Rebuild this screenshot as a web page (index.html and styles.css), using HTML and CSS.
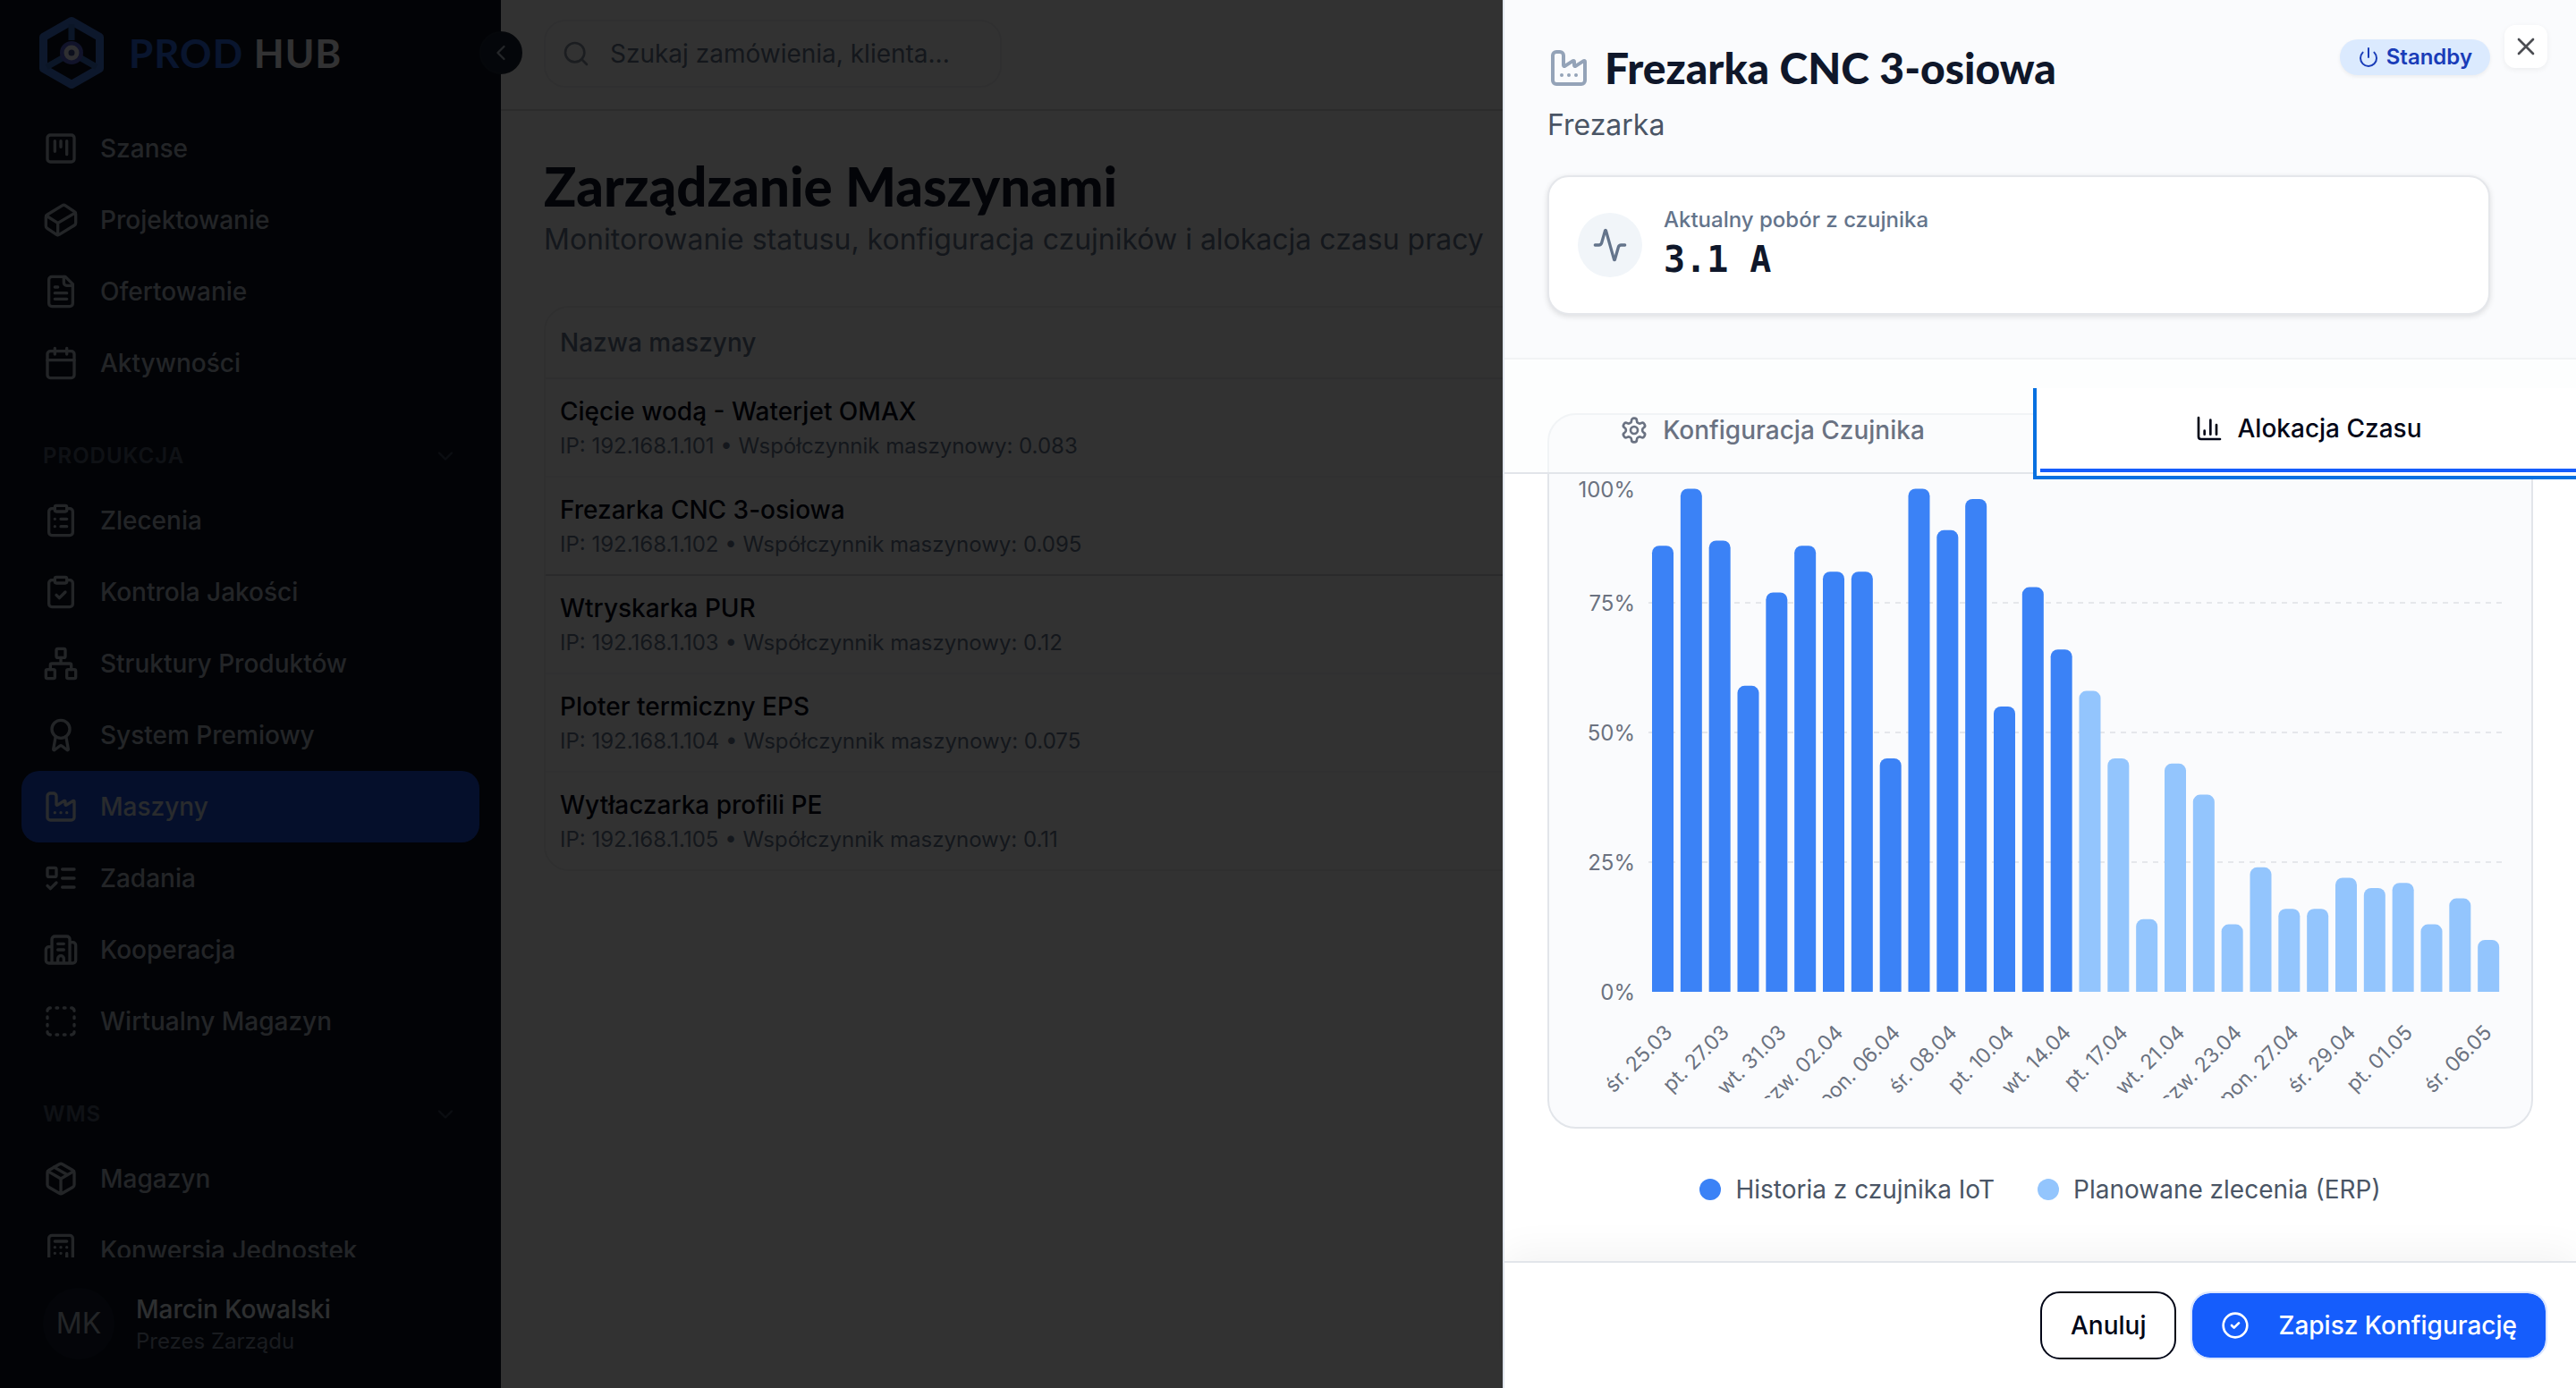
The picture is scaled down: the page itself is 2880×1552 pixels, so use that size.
FILE: index.html
```html
<!DOCTYPE html>
<html lang="pl">

<head>
    <meta charset="UTF-8">
    <meta name="viewport" content="width=device-width, initial-scale=1">
    <title>Prod Hub - Maszyny</title>
    <link rel="stylesheet" href="styles.css">
</head>

<body>
    <!-- icon sprite -->
    <svg class="sprite" aria-hidden="true">
        <symbol id="i-kanban" viewBox="0 0 24 24"><rect x="3" y="3" width="18" height="18" rx="2"/><path d="M8 7v7M12 7v4M16 7v9"/></symbol>
        <symbol id="i-cuboid" viewBox="0 0 24 24"><path d="m21.12 6.4-6.05-4.06a2 2 0 0 0-2.17-.05L2.95 8.41a2 2 0 0 0-.95 1.7v5.82a2 2 0 0 0 .88 1.66l6.05 4.07a2 2 0 0 0 2.17.05l9.95-6.12a2 2 0 0 0 .95-1.7V8.06a2 2 0 0 0-.88-1.66Z"/><path d="M10 22v-8L2.25 9.15M10 14l11.77-6.87"/></symbol>
        <symbol id="i-file" viewBox="0 0 24 24"><path d="M15 2H6a2 2 0 0 0-2 2v16a2 2 0 0 0 2 2h12a2 2 0 0 0 2-2V7Z"/><path d="M14 2v4a2 2 0 0 0 2 2h4M10 9H8M16 13H8M16 17H8"/></symbol>
        <symbol id="i-calendar" viewBox="0 0 24 24"><path d="M8 2v4M16 2v4M3 10h18"/><rect x="3" y="4" width="18" height="18" rx="2"/></symbol>
        <symbol id="i-cliplist" viewBox="0 0 24 24"><rect x="8" y="2" width="8" height="4" rx="1"/><path d="M16 4h2a2 2 0 0 1 2 2v14a2 2 0 0 1-2 2H6a2 2 0 0 1-2-2V6a2 2 0 0 1 2-2h2M12 11h4M12 16h4M8 11h.01M8 16h.01"/></symbol>
        <symbol id="i-clipcheck" viewBox="0 0 24 24"><rect x="8" y="2" width="8" height="4" rx="1"/><path d="M16 4h2a2 2 0 0 1 2 2v14a2 2 0 0 1-2 2H6a2 2 0 0 1-2-2V6a2 2 0 0 1 2-2h2M9 14l2 2 4-4"/></symbol>
        <symbol id="i-network" viewBox="0 0 24 24"><rect x="16" y="16" width="6" height="6" rx="1"/><rect x="2" y="16" width="6" height="6" rx="1"/><rect x="9" y="2" width="6" height="6" rx="1"/><path d="M5 16v-3a1 1 0 0 1 1-1h12a1 1 0 0 1 1 1v3M12 12V8"/></symbol>
        <symbol id="i-award" viewBox="0 0 24 24"><path d="m15.477 12.89 1.515 8.526a.5.5 0 0 1-.81.47l-3.58-2.687a1 1 0 0 0-1.197 0l-3.586 2.686a.5.5 0 0 1-.81-.469l1.514-8.526"/><circle cx="12" cy="8" r="6"/></symbol>
        <symbol id="i-factory" viewBox="0 0 24 24"><path d="M12 16h.01M16 16h.01M8 16h.01M3 19a2 2 0 0 0 2 2h14a2 2 0 0 0 2-2V8.5a.5.5 0 0 0-.769-.422l-4.462 2.844A.5.5 0 0 1 15 10.5v-2a.5.5 0 0 0-.769-.422L9.77 10.922A.5.5 0 0 1 9 10.5V5a2 2 0 0 0-2-2H5a2 2 0 0 0-2 2z"/></symbol>
        <symbol id="i-todo" viewBox="0 0 24 24"><rect x="3" y="5" width="6" height="6" rx="1"/><path d="m3 17 2 2 4-4M13 6h8M13 12h8M13 18h8"/></symbol>
        <symbol id="i-building" viewBox="0 0 24 24"><path d="M10 12h4M10 8h4M14 21v-3a2 2 0 0 0-4 0v3M6 10H4a2 2 0 0 0-2 2v7a2 2 0 0 0 2 2h16a2 2 0 0 0 2-2V9a2 2 0 0 0-2-2h-2M6 21V5a2 2 0 0 1 2-2h8a2 2 0 0 1 2 2v16"/></symbol>
        <symbol id="i-dashed" viewBox="0 0 24 24"><path d="M5 3a2 2 0 0 0-2 2M19 3a2 2 0 0 1 2 2M21 19a2 2 0 0 1-2 2M5 21a2 2 0 0 1-2-2M9 3h1M9 21h1M14 3h1M14 21h1M3 9v1M21 9v1M3 14v1M21 14v1"/></symbol>
        <symbol id="i-package" viewBox="0 0 24 24"><path d="M11 21.73a2 2 0 0 0 2 0l7-4A2 2 0 0 0 21 16V8a2 2 0 0 0-1-1.73l-7-4a2 2 0 0 0-2 0l-7 4A2 2 0 0 0 3 8v8a2 2 0 0 0 1 1.73zM12 22V12"/><path d="M3.29 7 12 12l8.71-5M7.5 4.27l9 5.15"/></symbol>
        <symbol id="i-calc" viewBox="0 0 24 24"><rect x="4" y="2" width="16" height="20" rx="2"/><path d="M8 6h8M16 14v4M16 10h.01M12 10h.01M8 10h.01M12 14h.01M8 14h.01M12 18h.01M8 18h.01"/></symbol>
        <symbol id="i-down" viewBox="0 0 24 24"><path d="m6 9 6 6 6-6"/></symbol>
        <symbol id="i-left" viewBox="0 0 24 24"><path d="m15 18-6-6 6-6"/></symbol>
        <symbol id="i-search" viewBox="0 0 24 24"><circle cx="11" cy="11" r="8"/><path d="m21 21-4.3-4.3"/></symbol>
        <symbol id="i-power" viewBox="0 0 24 24"><path d="M12 2v10M18.4 6.6a9 9 0 1 1-12.77.04"/></symbol>
        <symbol id="i-x" viewBox="0 0 24 24"><path d="M18 6 6 18M6 6l12 12"/></symbol>
        <symbol id="i-activity" viewBox="0 0 24 24"><path d="M22 12h-2.48a2 2 0 0 0-1.93 1.46l-2.35 8.36a.25.25 0 0 1-.48 0L9.24 2.18a.25.25 0 0 0-.48 0l-2.35 8.36A2 2 0 0 1 4.49 12H2"/></symbol>
        <symbol id="i-gear" viewBox="0 0 24 24"><path d="M12.22 2h-.44a2 2 0 0 0-2 2v.18a2 2 0 0 1-1 1.73l-.43.25a2 2 0 0 1-2 0l-.15-.08a2 2 0 0 0-2.73.73l-.22.38a2 2 0 0 0 .73 2.73l.15.1a2 2 0 0 1 1 1.72v.51a2 2 0 0 1-1 1.74l-.15.09a2 2 0 0 0-.73 2.73l.22.38a2 2 0 0 0 2.73.73l.15-.08a2 2 0 0 1 2 0l.43.25a2 2 0 0 1 1 1.73V20a2 2 0 0 0 2 2h.44a2 2 0 0 0 2-2v-.18a2 2 0 0 1 1-1.73l.43-.25a2 2 0 0 1 2 0l.15.08a2 2 0 0 0 2.73-.73l.22-.39a2 2 0 0 0-.73-2.73l-.15-.08a2 2 0 0 1-1-1.74v-.5a2 2 0 0 1 1-1.74l.15-.09a2 2 0 0 0 .73-2.73l-.22-.38a2 2 0 0 0-2.73-.73l-.15.08a2 2 0 0 1-2 0l-.43-.25a2 2 0 0 1-1-1.73V4a2 2 0 0 0-2-2z"/><circle cx="12" cy="12" r="3"/></symbol>
        <symbol id="i-chart" viewBox="0 0 24 24"><path d="M3 3v16a2 2 0 0 0 2 2h16M18 17V9M13 17V5M8 17v-3"/></symbol>
        <symbol id="i-check" viewBox="0 0 24 24"><circle cx="12" cy="12" r="10"/><path d="m9 12 2 2 4-4"/></symbol>
    </svg>

    <div class="app">
        <aside class="sidebar">
            <div class="brand">
                <svg class="brand-logo" viewBox="0 0 80 88" aria-hidden="true">
                    <g fill="none" stroke-linejoin="round">
                        <path d="M40 8.500 71.500 26.500v35L40 79.500 8.500 61.500v-35z" stroke="#4479dc" stroke-width="9"/>
                        <path d="M40 30V12M40 44 12 60M40 44l28 16" stroke="#3a6fc4" stroke-width="7"/>
                        <circle cx="40" cy="44" r="13" fill="#5560cf"/>
                        <circle cx="40" cy="44" r="6" fill="#3c4a8a" stroke="#e8ecf4" stroke-width="5"/>
                    </g>
                </svg>
                <span class="brand-name"><span class="brand-prod">PROD</span> HUB</span>
            </div>
            <nav class="nav">
                <a href="#" class="nav-item"><svg class="icon"><use href="#i-kanban"/></svg>Szanse</a>
                <a href="#" class="nav-item"><svg class="icon"><use href="#i-cuboid"/></svg>Projektowanie</a>
                <a href="#" class="nav-item"><svg class="icon"><use href="#i-file"/></svg>Ofertowanie</a>
                <a href="#" class="nav-item"><svg class="icon"><use href="#i-calendar"/></svg>Aktywności</a>

                <button type="button" class="nav-group">PRODUKCJA<svg class="icon icon-sm"><use href="#i-down"/></svg></button>
                <a href="#" class="nav-item"><svg class="icon"><use href="#i-cliplist"/></svg>Zlecenia</a>
                <a href="#" class="nav-item"><svg class="icon"><use href="#i-clipcheck"/></svg>Kontrola Jakości</a>
                <a href="#" class="nav-item"><svg class="icon"><use href="#i-network"/></svg>Struktury Produktów</a>
                <a href="#" class="nav-item"><svg class="icon"><use href="#i-award"/></svg>System Premiowy</a>
                <a href="#" class="nav-item active"><svg class="icon"><use href="#i-factory"/></svg>Maszyny</a>
                <a href="#" class="nav-item"><svg class="icon"><use href="#i-todo"/></svg>Zadania</a>
                <a href="#" class="nav-item"><svg class="icon"><use href="#i-building"/></svg>Kooperacja</a>
                <a href="#" class="nav-item"><svg class="icon"><use href="#i-dashed"/></svg>Wirtualny Magazyn</a>

                <button type="button" class="nav-group">WMS<svg class="icon icon-sm"><use href="#i-down"/></svg></button>
                <a href="#" class="nav-item"><svg class="icon"><use href="#i-package"/></svg>Magazyn</a>
                <a href="#" class="nav-item"><svg class="icon"><use href="#i-calc"/></svg>Konwersja Jednostek</a>
            </nav>
            <div class="user">
                <div class="avatar">MK</div>
                <div class="user-text">
                    <div class="user-name">Marcin Kowalski</div>
                    <div class="user-role">Prezes Zarządu</div>
                </div>
            </div>
            <button type="button" class="collapse" aria-label="Zwiń menu"><svg class="icon icon-sm"><use href="#i-left"/></svg></button>
        </aside>

        <div class="page">
            <header class="topbar">
                <label class="search">
                    <svg class="icon icon-md"><use href="#i-search"/></svg>
                    <input type="search" placeholder="Szukaj zamówienia, klienta..." aria-label="Szukaj">
                </label>
            </header>
            <main class="main">
                <h1>Zarządzanie Maszynami</h1>
                <p class="lead">Monitorowanie statusu, konfiguracja czujników i alokacja czasu pracy</p>
                <table class="machines">
                    <thead>
                        <tr><th>Nazwa maszyny</th></tr>
                    </thead>
                    <tbody>
                        <tr><td><div class="m-name">Cięcie wodą - Waterjet OMAX</div><div class="m-info">IP: 192.168.1.101 • Współczynnik maszynowy: 0.083</div></td></tr>
                        <tr class="selected"><td><div class="m-name">Frezarka CNC 3-osiowa</div><div class="m-info">IP: 192.168.1.102 • Współczynnik maszynowy: 0.095</div></td></tr>
                        <tr><td><div class="m-name">Wtryskarka PUR</div><div class="m-info">IP: 192.168.1.103 • Współczynnik maszynowy: 0.12</div></td></tr>
                        <tr><td><div class="m-name">Ploter termiczny EPS</div><div class="m-info">IP: 192.168.1.104 • Współczynnik maszynowy: 0.075</div></td></tr>
                        <tr><td><div class="m-name">Wytłaczarka profili PE</div><div class="m-info">IP: 192.168.1.105 • Współczynnik maszynowy: 0.11</div></td></tr>
                    </tbody>
                </table>
            </main>
        </div>
    </div>

    <div class="overlay"></div>

    <section class="drawer" role="dialog" aria-labelledby="drawerTitle">
        <header class="drawer-head">
            <div class="drawer-top">
                <div>
                    <h2 id="drawerTitle"><svg class="icon icon-lg"><use href="#i-factory"/></svg>Frezarka CNC 3-osiowa</h2>
                    <p class="drawer-type">Frezarka</p>
                </div>
                <span class="badge"><svg class="icon icon-xs"><use href="#i-power"/></svg>Standby</span>
            </div>
            <div class="reading">
                <span class="reading-icon"><svg class="icon"><use href="#i-activity"/></svg></span>
                <div>
                    <div class="reading-label">Aktualny pobór z czujnika</div>
                    <div class="reading-value">3.1 A</div>
                </div>
            </div>
        </header>
        <button type="button" class="close" aria-label="Zamknij"><svg class="icon icon-md"><use href="#i-x"/></svg></button>

        <div class="drawer-body">
            <div class="tabs-bar">
                <div class="tabs" role="tablist">
                    <button type="button" role="tab" class="tab" aria-selected="false"><svg class="icon icon-md"><use href="#i-gear"/></svg>Konfiguracja Czujnika</button>
                    <button type="button" role="tab" class="tab active" aria-selected="true"><svg class="icon icon-md"><use href="#i-chart"/></svg>Alokacja Czasu</button>
                </div>
            </div>
            <div class="panel">
                <div class="chart-card">
                    <svg id="chart" class="chart" viewBox="0 0 1034 732" role="img" aria-label="Alokacja czasu"></svg>
                </div>
                <div class="legend">
                    <span class="legend-item"><i class="dot dot-history"></i>Historia z czujnika IoT</span>
                    <span class="legend-item"><i class="dot dot-planned"></i>Planowane zlecenia (ERP)</span>
                </div>
            </div>
        </div>

        <footer class="drawer-foot">
            <button type="button" class="btn btn-outline">Anuluj</button>
            <button type="button" class="btn btn-primary"><svg class="icon icon-md"><use href="#i-check"/></svg>Zapisz Konfigurację</button>
        </footer>
    </section>

    <script>
        const history = [86, 97, 87, 59, 77, 86, 81, 81, 45, 97, 89, 95, 55, 78, 66];
        const planned = [58, 45, 14, 44, 38, 13, 24, 16, 16, 22, 20, 21, 13, 18, 10];
        const days = {
            0: 'śr. 25.03', 2: 'pt. 27.03', 4: 'wt. 31.03', 6: 'czw. 02.04', 8: 'pon. 06.04',
            10: 'śr. 08.04', 12: 'pt. 10.04', 14: 'wt. 14.04', 16: 'pt. 17.04', 18: 'wt. 21.04',
            20: 'czw. 23.04', 22: 'pon. 27.04', 24: 'śr. 29.04', 26: 'pt. 01.05', 29: 'śr. 06.05'
        };

        // plot area inside the 1034x732 viewBox
        const left = 79, right = 1034, base = 613, top_ = 50, unit = 5.8;
        const values = history.concat(planned);
        const step = (right - left) / values.length;
        const barWidth = 24;
        let out = '';

        [25, 50, 75].forEach(function (t) {
            const y = base - t * unit;
            out += `<line class="grid" x1="${left}" y1="${y}" x2="${right}" y2="${y}"/>`;
            out += `<text class="tick" x="64" y="${y + 9}">${t}%</text>`;
        });
        out += `<text class="tick" x="64" y="${base + 9}">0%</text>`;
        out += `<text class="tick" x="64" y="${top_ + 10}">100%</text>`;

        values.forEach(function (v, i) {
            const x = left + i * step + 4;
            const h = v * unit;
            const cls = i < history.length ? 'bar-history' : 'bar-planned';
            out += `<path class="${cls}" d="M${x} ${base}v${8 - h}a8 8 0 0 1 8-8h${barWidth - 16}a8 8 0 0 1 8 8v${h - 8}z"/>`;
            if (days[i]) {
                const lx = i === values.length - 1 ? x + 17 : x + 24;
                out += `<text class="day" transform="translate(${lx} 660) rotate(-45)">${days[i]}</text>`;
            }
        });
        document.getElementById('chart').innerHTML = out;
    </script>
</body>

</html>
```

FILE: styles.css
```css
* {
    box-sizing: border-box;
}

body {
    margin: 0;
    font-family: Inter, "Liberation Sans", sans-serif;
    font-size: 28px;
    line-height: 40px;
    color: #020617;
    background: #fafafa;
    overflow: hidden;
}

h1,
h2,
p {
    margin: 0;
}

button,
input {
    font: inherit;
    color: inherit;
}

button {
    cursor: pointer;
}

a {
    color: inherit;
    text-decoration: none;
}

.sprite {
    display: none;
}

.icon {
    width: 40px;
    height: 40px;
    flex-shrink: 0;
    fill: none;
    stroke: currentColor;
    stroke-width: 2;
    stroke-linecap: round;
    stroke-linejoin: round;
}

.icon-xs {
    width: 24px;
    height: 24px;
}

.icon-sm {
    width: 28px;
    height: 28px;
}

.icon-md {
    width: 32px;
    height: 32px;
}

.icon-lg {
    width: 48px;
    height: 48px;
}

.app {
    display: flex;
    height: 100vh;
}

/* Sidebar */
.sidebar {
    position: relative;
    width: 560px;
    flex-shrink: 0;
    display: flex;
    flex-direction: column;
    background: #0b1222;
    color: #aeb7c4;
}

.brand {
    display: flex;
    align-items: center;
    gap: 24px;
    padding: 15px 40px;
}

.brand-logo {
    width: 80px;
    height: 88px;
}

.brand-name {
    font-family: Lato, sans-serif;
    font-size: 44px;
    line-height: 48px;
    font-weight: 700;
    letter-spacing: 1px;
    color: #f8fafc;
}

.brand-prod {
    color: #2f6be6;
}

.nav {
    flex: 1;
    min-height: 0;
    overflow: hidden;
    padding: 8px 24px 0;
}

.nav-item {
    display: flex;
    align-items: center;
    gap: 24px;
    height: 80px;
    padding: 0 24px;
    border-radius: 20px;
    font-weight: 500;
}

.nav-item.active {
    background: #1d4ed8;
    color: #cbd5e1;
}

.nav-group {
    display: flex;
    align-items: center;
    justify-content: space-between;
    width: 100%;
    height: 64px;
    margin-top: 32px;
    padding: 0 24px;
    border: 0;
    background: none;
    font-size: 24px;
    font-weight: 600;
    letter-spacing: 1px;
    color: #4c586b;
}

.nav-group .icon {
    opacity: 0.7;
}

.user {
    display: flex;
    align-items: center;
    gap: 24px;
    padding: 34px 48px 32px;
}

.avatar {
    width: 80px;
    height: 80px;
    border-radius: 50%;
    background: #141d2e;
    font-size: 32px;
    line-height: 80px;
    text-align: center;
}

.user-text {
    padding-top: 4px;
}

.user-name {
    line-height: 36px;
    font-weight: 500;
    color: #e2e8f0;
}

.user-role {
    font-size: 24px;
    line-height: 36px;
    color: #7c8799;
}

.collapse {
    position: absolute;
    top: 35px;
    right: -24px;
    display: flex;
    align-items: center;
    justify-content: center;
    width: 48px;
    height: 48px;
    padding: 0;
    border: 2px solid #1a2436;
    border-radius: 50%;
    background: #172033;
    color: #b4bdca;
}

/* Page behind the drawer */
.page {
    flex: 1;
    min-width: 0;
}

.topbar {
    padding: 22px 48px 24px;
    border-bottom: 2px solid #dcdcdc;
}

.search {
    display: flex;
    align-items: center;
    gap: 22px;
    width: 512px;
    height: 76px;
    padding: 0 18px;
    border: 2px solid #ececee;
    border-radius: 24px;
    color: #8590a2;
}

.search input {
    flex: 1;
    min-width: 0;
    padding: 0;
    border: 0;
    outline: 0;
    background: none;
}

.search input::placeholder {
    color: #64748b;
    opacity: 1;
}

.main {
    padding: 48px;
}

h1,
h2 {
    font-family: Lato, sans-serif;
    font-weight: 900;
    color: #0f172a;
}

h1 {
    font-size: 60px;
    line-height: 72px;
}

.lead {
    font-size: 32px;
    line-height: 48px;
    color: #64748b;
}

.machines {
    width: 100%;
    margin-top: 50px;
    border: 2px solid #e8eaec;
    border-radius: 28px;
    border-spacing: 0;
}

.machines th {
    height: 80px;
    padding: 0 16px;
    border-bottom: 2px solid #e6e7e9;
    font-weight: 500;
    text-align: left;
    color: #64748b;
}

.machines td {
    padding: 16px 16px 14px;
    border-bottom: 2px solid #f0f1f2;
}

.machines tr.selected td {
    border-bottom-color: #d0d2d5;
}

.machines tr:last-child td {
    border-bottom: 0;
}

.m-name {
    line-height: 40px;
    font-weight: 500;
}

.m-info {
    font-size: 24px;
    line-height: 38px;
    color: #64748b;
}

.overlay {
    position: fixed;
    inset: 0;
    background: rgba(0, 0, 0, 0.8);
}

/* Drawer */
.drawer {
    position: fixed;
    top: 0;
    right: 0;
    bottom: 0;
    width: 1200px;
    max-width: 100%;
    display: flex;
    flex-direction: column;
    border-left: 2px solid #e2e8f0;
    background: #fff;
}

.drawer-head {
    padding: 44px 96px 48px 48px;
    border-bottom: 2px solid #f1f3f5;
    background: #fafbfd;
}

.drawer-top {
    display: flex;
    justify-content: space-between;
    align-items: flex-start;
}

h2 {
    display: flex;
    align-items: center;
    gap: 16px;
    font-size: 48px;
    line-height: 64px;
}

h2 .icon {
    color: #94a3b8;
}

.drawer-type {
    margin-top: 8px;
    font-size: 32px;
    line-height: 48px;
    color: #4a5565;
}

.badge {
    display: flex;
    align-items: center;
    gap: 8px;
    height: 40px;
    padding: 0 20px;
    border-radius: 20px;
    background: #dbeafe;
    box-shadow: 0 2px 4px rgba(0, 0, 0, 0.06);
    font-size: 24px;
    font-weight: 600;
    color: #193cb8;
}

.close {
    position: absolute;
    top: 28px;
    right: 32px;
    display: flex;
    align-items: center;
    justify-content: center;
    width: 48px;
    height: 48px;
    padding: 0;
    border: 0;
    border-radius: 12px;
    background: #fff;
    box-shadow: 0 2px 6px rgba(0, 0, 0, 0.06);
    color: #4b4d52;
}

.reading {
    display: flex;
    align-items: center;
    gap: 24px;
    margin-top: 32px;
    padding: 32px;
    border: 2px solid #e5e7eb;
    border-radius: 24px;
    background: #fff;
    box-shadow: 0 2px 6px rgba(0, 0, 0, 0.12);
}

.reading-icon {
    display: flex;
    align-items: center;
    justify-content: center;
    width: 72px;
    height: 72px;
    border-radius: 50%;
    background: #f1f5f9;
    color: #64748b;
}

.reading-label {
    font-size: 24px;
    line-height: 32px;
    font-weight: 500;
    color: #64748b;
}

.reading-value {
    font-family: "DejaVu Sans Mono", monospace;
    font-size: 40px;
    line-height: 56px;
    font-weight: 700;
    color: #0f172a;
}

.drawer-body {
    flex: 1;
    min-height: 0;
    overflow: hidden;
}

.tabs-bar {
    position: relative;
    z-index: 1;
    padding-top: 32px;
    background: rgba(252, 253, 254, 0.6);
}

/* the focus ring may spill out everywhere but above the bar */
.tabs {
    display: flex;
    height: 96px;
    border-bottom: 2px solid #e2e5ea;
    clip-path: inset(0 -8px -8px -8px);
}

.tab {
    flex: 1;
    display: flex;
    align-items: center;
    justify-content: center;
    gap: 16px;
    padding: 0;
    border: 0;
    background: none;
    font-weight: 500;
    color: #6a7282;
}

.tab.active {
    border-bottom: 4px solid #155dfc;
    background: #fff;
    box-shadow: 0 0 0 4px #fff, 0 0 0 8px #0670e0;
    color: #020617;
}

/* panel is scrolled a little under the tab bar */
.panel {
    margin-top: -68px;
    padding: 0 48px 48px;
}

.chart-card {
    padding: 32px;
    border: 2px solid #e2e5ea;
    border-radius: 32px;
    background: #fafbfd;
}

.chart {
    display: block;
    width: 100%;
    overflow: hidden;
}

.chart text {
    fill: #6b7280;
    text-anchor: end;
}

.tick {
    font-size: 24px;
}

.day {
    font-size: 23px;
}

.grid {
    stroke: #e5e7eb;
    stroke-width: 2;
    stroke-dasharray: 6 6;
}

.bar-history {
    fill: #3b82f6;
}

.bar-planned {
    fill: #93c5fd;
}

.legend {
    display: flex;
    justify-content: center;
    gap: 48px;
    margin-top: 48px;
    color: #4a5565;
}

.legend-item {
    display: flex;
    align-items: center;
    gap: 16px;
}

.dot {
    width: 24px;
    height: 24px;
    border-radius: 50%;
}

.dot-history {
    background: #3b82f6;
}

.dot-planned {
    background: #93c5fd;
}

.drawer-foot {
    position: relative;
    z-index: 2;
    display: flex;
    justify-content: flex-end;
    gap: 16px;
    padding: 32px;
    border-top: 2px solid #e2e5ea;
    background: #fff;
    box-shadow: 0 -10px 40px rgba(0, 0, 0, 0.05);
}

.btn {
    display: flex;
    align-items: center;
    gap: 32px;
    height: 76px;
    padding: 0 32px;
    border: 2px solid;
    border-radius: 22px;
    font-weight: 500;
}

.btn-outline {
    border-color: #020617;
    background: #fff;
}

.btn-primary {
    border-color: #dbe6fe;
    background: #155dfc;
    background-clip: padding-box;
    color: #fff;
}
```
